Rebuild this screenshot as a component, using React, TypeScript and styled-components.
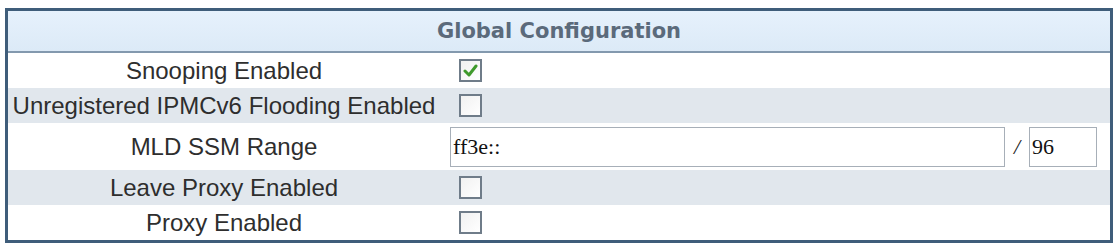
import React from 'react';
import styled, { createGlobalStyle } from 'styled-components';

const GlobalStyle = createGlobalStyle`
  html, body {
    margin: 0;
    padding: 0;
    background: #ffffff;
  }
`;

const Page = styled.div`
  padding: 8px 0 0 5px;
`;

const Panel = styled.div`
  width: 1108px;
  box-sizing: border-box;
  border: 3px solid #3f5d7a;
  background: #ffffff;
`;

const Header = styled.div`
  height: 40px;
  display: flex;
  align-items: center;
  justify-content: center;
  background: linear-gradient(#e6f1fc, #dceaf7);
  border-bottom: 2px solid #8399ae;
  font-family: "DejaVu Sans", Verdana, sans-serif;
  font-weight: bold;
  font-size: 21px;
  color: #5b6a7b;
`;

const Row = styled.div<{ $shade?: boolean; $tall?: boolean }>`
  display: grid;
  grid-template-columns: 432px 1fr;
  align-items: center;
  height: ${p => (p.$tall ? 47 : 35)}px;
  background: ${p => (p.$shade ? '#e1e7ed' : '#ffffff')};
`;

const Label = styled.div`
  text-align: center;
  white-space: nowrap;
  font-family: "Liberation Sans", Arial, sans-serif;
  font-size: 24px;
  line-height: 35px;
  color: #2e2e2e;
`;

const Value = styled.div`
  display: flex;
  align-items: center;
  padding-left: 10px;
`;

const Box = styled.span`
  display: inline-flex;
  align-items: center;
  justify-content: center;
  width: 23px;
  height: 23px;
  box-sizing: border-box;
  margin-left: 9px;
  border: 2px solid #6f7c89;
  background: linear-gradient(135deg, #f1f1f1, #ffffff);
`;

const TextInput = styled.input<{ $w: number }>`
  width: ${p => p.$w}px;
  height: 40px;
  box-sizing: border-box;
  border: 1px solid #a7afb8;
  padding: 0 2px;
  font-family: "Liberation Serif", "Times New Roman", serif;
  font-size: 22px;
  color: #111;
  background: #fff;
  outline: none;
`;

const Slash = styled.span`
  width: 24px;
  text-align: center;
  font-family: "Liberation Serif", "Times New Roman", serif;
  font-style: italic;
  font-size: 22px;
  color: #222;
`;

const Check = ({ checked }: { checked?: boolean }) => (
  <Box>
    {checked && (
      <svg width="15" height="13" viewBox="0 0 15 13">
        <path d="M2 7 L6 11 L13 2" fill="none" stroke="#3f9a2c" strokeWidth="3" strokeLinecap="round" strokeLinejoin="round" />
      </svg>
    )}
  </Box>
);

export default function App() {
  return (
    <>
      <GlobalStyle />
      <Page>
        <Panel>
          <Header>Global Configuration</Header>
          <Row>
            <Label>Snooping Enabled</Label>
            <Value><Check checked /></Value>
          </Row>
          <Row $shade>
            <Label>Unregistered IPMCv6 Flooding Enabled</Label>
            <Value><Check /></Value>
          </Row>
          <Row $tall>
            <Label>MLD SSM Range</Label>
            <Value>
              <TextInput $w={555} defaultValue="ff3e::" />
              <Slash>/</Slash>
              <TextInput $w={68} defaultValue="96" />
            </Value>
          </Row>
          <Row $shade>
            <Label>Leave Proxy Enabled</Label>
            <Value><Check /></Value>
          </Row>
          <Row>
            <Label>Proxy Enabled</Label>
            <Value><Check /></Value>
          </Row>
        </Panel>
      </Page>
    </>
  );
}
